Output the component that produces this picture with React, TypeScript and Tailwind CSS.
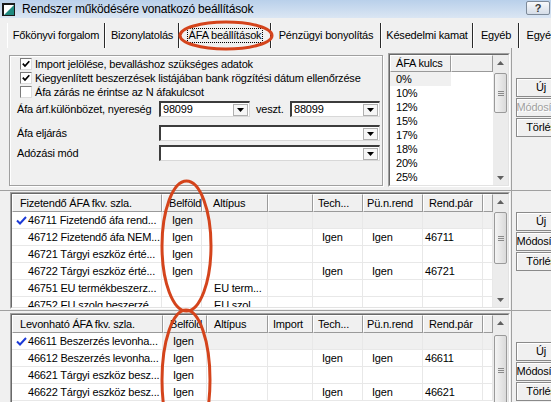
import React from "react";

type Col = { label: string; w: string; hp: string; bp: string };

const midCols: Col[] = [
  { label: "Fizetendő ÁFA fkv. szla.", w: "w-[150px]", hp: "pl-[7px]", bp: "pl-[4px]" },
  { label: "Belföld", w: "w-[40px]", hp: "pl-[6px]", bp: "pl-[10px]" },
  { label: "Altípus", w: "w-[66px]", hp: "pl-[10px]", bp: "pl-[12px]" },
  { label: "", w: "w-[45px]", hp: "pl-[4px]", bp: "pl-[4px]" },
  { label: "Tech...", w: "w-[50px]", hp: "pl-[4px]", bp: "pl-[9px]" },
  { label: "Pü.n.rend", w: "w-[60px]", hp: "pl-[3px]", bp: "pl-[9px]" },
  { label: "Rend.pár", w: "w-[60px]", hp: "pl-[5px]", bp: "pl-[2px]" },
  { label: "", w: "w-[10px]", hp: "", bp: "" },
];

const botCols: Col[] = [
  { label: "Levonható ÁFA fkv. szla.", w: "w-[151px]", hp: "pl-[7px]", bp: "pl-[4px]" },
  { label: "Belföld", w: "w-[44px]", hp: "pl-[6px]", bp: "pl-[10px]" },
  { label: "Altípus", w: "w-[61px]", hp: "pl-[6px]", bp: "pl-[8px]" },
  { label: "Import", w: "w-[45px]", hp: "pl-[4px]", bp: "pl-[4px]" },
  { label: "Tech...", w: "w-[50px]", hp: "pl-[4px]", bp: "pl-[9px]" },
  { label: "Pü.n.rend", w: "w-[60px]", hp: "pl-[3px]", bp: "pl-[9px]" },
  { label: "Rend.pár", w: "w-[60px]", hp: "pl-[5px]", bp: "pl-[2px]" },
  { label: "", w: "w-[10px]", hp: "", bp: "" },
];

const midRows: string[][] = [
  ["46711 Fizetendő áfa rend...", "Igen", "", "", "", "", "", ""],
  ["46712 Fizetendő áfa NEM...", "Igen", "", "", "Igen", "Igen", "46711", ""],
  ["46721 Tárgyi eszköz érté...", "Igen", "", "", "", "", "", ""],
  ["46722 Tárgyi eszköz érté...", "Igen", "", "", "Igen", "Igen", "46721", ""],
  ["46751 EU termékbeszerz...", "", "EU term...", "", "", "", "", ""],
  ["46752 EU szolg beszerzé...", "", "EU szol...", "", "", "", "", ""],
];

const botRows: string[][] = [
  ["46611 Beszerzés levonha...", "Igen", "", "", "", "", "", ""],
  ["46612 Beszerzés levonha...", "Igen", "", "", "Igen", "Igen", "46611", ""],
  ["46621 Tárgyi eszköz besz...", "Igen", "", "", "", "", "", ""],
  ["46622 Tárgyi eszköz besz...", "Igen", "", "", "Igen", "Igen", "46621", ""],
];

const rates = ["0%", "10%", "12%", "15%", "17%", "18%", "20%", "25%"];

const tabs = [
  { label: "Főkönyvi forgalom", w: "w-[98px]" },
  { label: "Bizonylatolás", w: "w-[74px]" },
  { label: "ÁFA beállítások", w: "w-[92px]", sel: true },
  { label: "Pénzügyi bonyolítás", w: "w-[110px]" },
  { label: "Késedelmi kamat", w: "w-[92px]" },
  { label: "Egyéb", w: "w-[46px]" },
  { label: "Egyéb adatok", w: "w-[80px]" },
];

function Tick() {
  return (
    <svg width="11" height="9" viewBox="0 0 11 9">
      <path d="M1 4.5 L4 7.5 L10 1" stroke="#1c3ad8" strokeWidth="2" fill="none" />
    </svg>
  );
}

function CheckBox({ checked }: { checked: boolean }) {
  return (
    <span className="w-[12px] h-[12px] shrink-0 border border-t-[#7a7a7a] border-l-[#7a7a7a] border-r-[#dcdcdc] border-b-[#dcdcdc] bg-white flex items-center justify-center">
      {checked && (
        <svg width="8" height="8" viewBox="0 0 8 8">
          <path d="M0.8 3.6 L3 6 L7.3 1.2" stroke="#000" strokeWidth="1.7" fill="none" />
        </svg>
      )}
    </span>
  );
}

function Combo({ w, value }: { w: string; value?: string }) {
  return (
    <div className={`${w} h-[16px] shrink-0 bg-white border-t-2 border-l-2 border-t-[#3c3c3c] border-l-[#3c3c3c] border-r border-b border-r-[#d8d8d8] border-b-[#d8d8d8] flex items-center`}>
      <span className="pl-[2px] whitespace-nowrap">{value ?? ""}</span>
      <div className="ml-auto mr-[1px] w-[15px] h-[12px] border border-[#b0b0b0] bg-[#f6f6f6] flex items-center justify-center">
        <svg width="7" height="4" viewBox="0 0 7 4">
          <path d="M0 0 L7 0 L3.5 4 Z" fill="#000" />
        </svg>
      </div>
    </div>
  );
}

function Btn({ label, disabled }: { label: string; disabled?: boolean }) {
  return (
    <div className="w-[50px] h-[19px] shrink-0 bg-[#f0f0f0] border border-[#8a8a8a] shadow-[inset_1px_1px_0_#ffffff] flex items-center justify-center whitespace-nowrap">
      <span className={disabled ? "text-[#a0a0a0] [text-shadow:1px_1px_0_#ffffff]" : "text-black"}>{label}</span>
    </div>
  );
}

function Buttons({ topDisabled }: { topDisabled?: boolean }) {
  return (
    <div className="flex flex-col gap-[1px]">
      <Btn label="Új" />
      <Btn label="Módosítás" disabled={topDisabled} />
      <Btn label="Törlés" />
    </div>
  );
}

function Scroll({ thumb }: { thumb: string }) {
  return (
    <div className="w-[15px] h-full shrink-0 bg-[#ececec] flex flex-col items-center">
      <div className="h-[15px] w-full shrink-0 flex items-center justify-center">
        <svg width="7" height="4" viewBox="0 0 7 4">
          <path d="M0 4 L3.5 0 L7 4 Z" fill="#606060" />
        </svg>
      </div>
      <div className={`${thumb} w-[13px] shrink-0 rounded-[2px] border border-[#9a9a9a] bg-gradient-to-r from-[#f4f4f4] to-[#dadada] flex flex-col items-center justify-center gap-[1px]`}>
        <span className="w-[6px] h-[1px] bg-[#8a8a8a]" />
        <span className="w-[6px] h-[1px] bg-[#8a8a8a]" />
        <span className="w-[6px] h-[1px] bg-[#8a8a8a]" />
      </div>
      <div className="mt-auto h-[15px] w-full shrink-0 flex items-center justify-center">
        <svg width="7" height="4" viewBox="0 0 7 4">
          <path d="M0 0 L7 0 L3.5 4 Z" fill="#606060" />
        </svg>
      </div>
    </div>
  );
}

function Grid({ cols, rows, h, thumb }: { cols: Col[]; rows: string[][]; h: string; thumb: string }) {
  return (
    <div className={`w-[500px] ${h} shrink-0 border border-t-[#a0a0a0] border-l-[#a0a0a0] border-r-white border-b-white`}>
      <div className="w-full h-full border border-t-[#696969] border-l-[#696969] border-r-[#e3e3e3] border-b-[#e3e3e3] bg-white flex overflow-hidden">
        <div className="w-[481px] shrink-0 flex flex-col">
          <div className="h-[18px] flex shrink-0">
            {cols.map((c, i) => (
              <div
                key={i}
                className={`${c.w} ${c.hp} h-full shrink-0 flex items-center bg-[#f0f0f0] border-t border-l border-t-white border-l-white border-r border-b border-r-[#9a9a9a] border-b-[#9a9a9a] whitespace-nowrap overflow-hidden`}
              >
                {c.label}
              </div>
            ))}
          </div>
          {rows.map((r, ri) => (
            <div key={ri} className="h-[17px] flex shrink-0">
              {cols.map((c, ci) => (
                <div
                  key={ci}
                  className={`${c.w} ${c.bp} h-full shrink-0 flex items-center border-r border-b border-[#e8e8e8] whitespace-nowrap overflow-hidden ${
                    ri === 0 && ci > 0 ? "bg-[#f0f0f0]" : ""
                  }`}
                >
                  {ci === 0 && <span className="w-[12px] shrink-0 flex items-center">{ri === 0 && <Tick />}</span>}
                  {r[ci]}
                </div>
              ))}
            </div>
          ))}
        </div>
        <Scroll thumb={thumb} />
      </div>
    </div>
  );
}

export default function App() {
  return (
    <div className="relative w-[551px] h-[402px] overflow-hidden bg-[#f0f0f0] text-black text-[11px] leading-none tracking-[-0.2px] font-['Liberation_Sans',Arial,sans-serif]">
      {/* Title bar */}
      <div className="h-[18px] flex items-center bg-gradient-to-b from-[#b9d0ea] to-[#dbe6f3]">
        <svg className="ml-[2px] shrink-0" width="13" height="13" viewBox="0 0 13 13">
          <rect x="0.5" y="0.5" width="12" height="12" fill="#ffffff" stroke="#1a1a1a" />
          <path d="M1.5 1.5 L1.5 0.5" stroke="#1a1a1a" />
          <polygon points="12,2 12,12 2,12" fill="#1f8a80" />
          <rect x="0.5" y="0.5" width="1.5" height="12" fill="#1a1a1a" />
          <rect x="0.5" y="0.5" width="12" height="1.5" fill="#1a1a1a" />
        </svg>
        <span className="ml-[7px] text-[12px] tracking-[-0.2px] whitespace-nowrap">Rendszer működésére vonatkozó beállítások</span>
        <div className="ml-auto mr-[1px] self-start mt-[1px] w-[24px] h-[14px] rounded-[2px] border border-[#7d8a99] bg-gradient-to-b from-[#f8f9fb] to-[#d5dde8] flex items-center justify-center text-[11px] font-bold text-[#3a3a3a]">
          ?
        </div>
      </div>

      {/* Tabs */}
      <div className="mt-[5px] h-[25px] flex pl-[7px]">
        {tabs.map((t, i) => (
          <div
            key={i}
            className={`${t.w} h-full shrink-0 flex items-center justify-center border-l border-l-white border-r border-r-[#2a2a2a] whitespace-nowrap overflow-hidden`}
          >
            {t.sel ? (
              <span className="border border-dotted border-black px-[1px] py-[1px]">{t.label}</span>
            ) : (
              t.label
            )}
          </div>
        ))}
      </div>

      {/* Top section */}
      <div className="h-[142px] flex items-start">
        <div className="ml-[9px] mt-[7px] w-[374px] h-[131px] shrink-0 border border-[#a0a0a0] shadow-[1px_1px_0_#ffffff,inset_1px_1px_0_#ffffff] pl-[7px] pt-[1px] flex flex-col">
          <div className="h-[14px] pl-[3px] flex items-center gap-[3px]">
            <CheckBox checked />
            <span className="whitespace-nowrap">Import jelölése, bevalláshoz szükséges adatok</span>
          </div>
          <div className="h-[14px] pl-[3px] flex items-center gap-[3px]">
            <CheckBox checked />
            <span className="whitespace-nowrap">Kiegyenlített beszerzések listájában bank rögzítési dátum ellenőrzése</span>
          </div>
          <div className="h-[14px] pl-[3px] flex items-center gap-[3px]">
            <CheckBox checked={false} />
            <span className="whitespace-nowrap">Áfa zárás ne érintse az N áfakulcsot</span>
          </div>
          <div className="mt-[2px] h-[16px] flex items-center">
            <span className="w-[142px] shrink-0 whitespace-nowrap">Áfa árf.különbözet, nyereség</span>
            <Combo w="w-[91px]" value="98099" />
            <span className="ml-[6px] w-[34px] shrink-0 whitespace-nowrap">veszt.</span>
            <Combo w="w-[90px]" value="88099" />
          </div>
          <div className="mt-[8px] h-[16px] flex items-center">
            <span className="w-[142px] shrink-0 whitespace-nowrap">Áfa eljárás</span>
            <Combo w="w-[221px]" />
          </div>
          <div className="mt-[4px] h-[16px] flex items-center">
            <span className="w-[142px] shrink-0 whitespace-nowrap">Adózási mód</span>
            <Combo w="w-[221px]" />
          </div>
        </div>

        <div className="ml-[5px] mt-[5px] w-[122px] h-[134px] shrink-0 border border-t-[#a0a0a0] border-l-[#a0a0a0] border-r-white border-b-white">
          <div className="w-full h-full border border-t-[#696969] border-l-[#696969] border-r-[#e3e3e3] border-b-[#e3e3e3] bg-white flex overflow-hidden">
            <div className="w-[103px] shrink-0 flex flex-col">
              <div className="h-[17px] flex shrink-0">
                <div className="w-[61px] h-full pl-[5px] flex items-center bg-[#f0f0f0] border-t border-l border-t-white border-l-white border-r border-b border-r-[#9a9a9a] border-b-[#9a9a9a] whitespace-nowrap">
                  ÁFA kulcs
                </div>
                <div className="w-[42px] h-full bg-[#f0f0f0] border-t border-l border-t-white border-l-white border-r border-b border-r-[#9a9a9a] border-b-[#9a9a9a]" />
              </div>
              {rates.map((r, i) => (
                <div key={r} className="h-[14px] flex shrink-0">
                  <div className={`w-[61px] h-full pl-[6px] flex items-center ${i === 0 ? "bg-[#f0f0f0]" : ""}`}>{r}</div>
                </div>
              ))}
            </div>
            <Scroll thumb="mt-[3px] h-[40px]" />
          </div>
        </div>

        <div className="ml-[1px] w-[40px] h-full shrink-0 border-l border-l-[#a0a0a0] pl-[4px] pt-[30px]">
          <Buttons topDisabled />
        </div>
      </div>

      {/* Middle section */}
      <div className="h-[120px] flex items-start border-t border-t-[#a0a0a0]">
        <div className="ml-[10px] mt-[1px]">
          <Grid cols={midCols} rows={midRows} h="h-[117px]" thumb="mt-[3px] h-[52px]" />
        </div>
        <div className="ml-[1px] w-[40px] h-full shrink-0 border-l border-l-[#a0a0a0] pl-[4px] pt-[21px]">
          <Buttons />
        </div>
      </div>

      {/* Bottom section */}
      <div className="h-[92px] flex items-start border-t border-t-[#a0a0a0]">
        <div className="ml-[10px] mt-[2px]">
          <Grid cols={botCols} rows={botRows} h="h-[110px]" thumb="mt-[5px] h-[70px]" />
        </div>
        <div className="ml-[1px] w-[40px] h-full shrink-0 border-l border-l-[#a0a0a0] pl-[4px] pt-[31px]">
          <Buttons />
        </div>
      </div>

      {/* Red annotation ellipses (overlay) */}
      <svg className="absolute left-0 top-0 pointer-events-none" width="551" height="402" viewBox="0 0 551 402">
        <ellipse cx="226" cy="35.5" rx="46" ry="13.5" fill="none" stroke="#d4441c" strokeWidth="3" />
        <ellipse cx="186.5" cy="246" rx="24.5" ry="65" fill="none" stroke="#d4441c" strokeWidth="3" />
        <ellipse cx="186" cy="380" rx="24" ry="70" fill="none" stroke="#d4441c" strokeWidth="3" />
      </svg>
    </div>
  );
}
